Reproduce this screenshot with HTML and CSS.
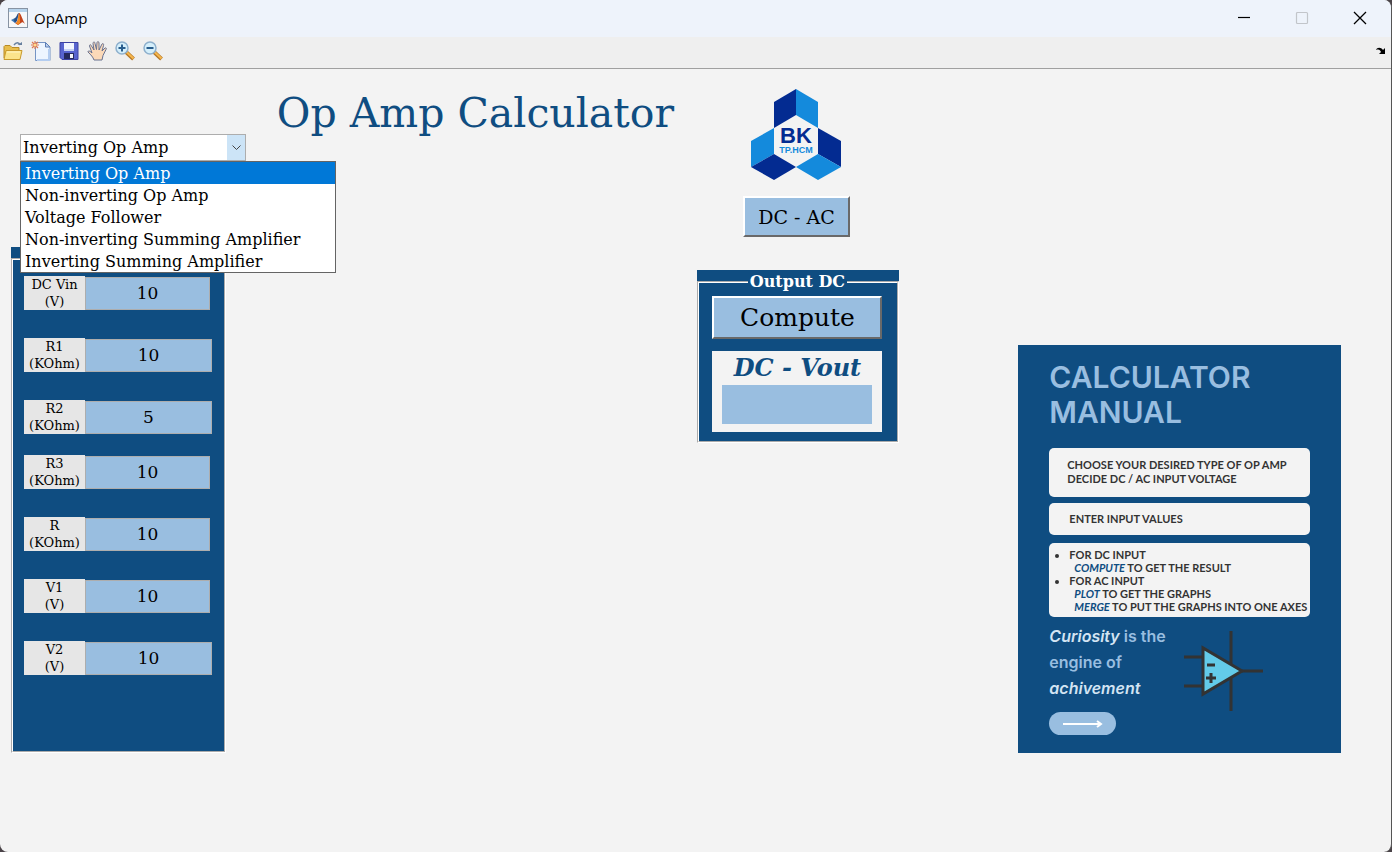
FILE: index.html
```html
<!DOCTYPE html>
<html lang="en">
<head>
<meta charset="utf-8">
<title>OpAmp</title>
<link rel="stylesheet" href="styles.css">
</head>
<body>
<div class="window">
  <header class="titlebar">
    <svg class="app-icon" viewBox="0 0 20 20" aria-hidden="true">
      <rect x=".5" y=".5" width="19" height="19" fill="#f7f8fa" stroke="#8793a3"/>
      <path d="M1 1h18v3H1z" fill="#b6d3ec"/>
      <path d="M3 12l4-2 2 2-2 3z" fill="#3c78b4"/>
      <path d="M7 10c2-1 2-5 4-5l-2 8-2 2-1-3z" fill="#264f88"/>
      <path d="M11 5c2 0 3 6 6 11-2-2-3-2-4-1l-3 2-3-2c3 0 3-5 4-10z" fill="#c4451c"/>
      <path d="M11 5c-1 5-1 9-3 10l2 2 2-2c0-4 0-7-1-10z" fill="#f08a24"/>
    </svg>
    <h1 class="app-name">OpAmp</h1>
    <div class="window-controls">
      <button class="win-btn" aria-label="Minimize"><svg viewBox="0 0 14 14"><path d="M1 6.5h12" stroke="#000" stroke-width="1.2"/></svg></button>
      <button class="win-btn" aria-label="Maximize" disabled><svg viewBox="0 0 14 14"><rect x="1.5" y="1.5" width="11" height="11" rx="1" fill="none" stroke="#c2c5ca" stroke-width="1.2"/></svg></button>
      <button class="win-btn" aria-label="Close"><svg viewBox="0 0 14 14"><path d="M1 1l12 12M13 1L1 13" stroke="#000" stroke-width="1.3"/></svg></button>
    </div>
  </header>

  <div class="toolbar" role="toolbar" aria-label="Figure tools">
    <button class="tool" aria-label="Open"><svg viewBox="0 0 20 20">
      <path d="M1 17V5.500l1-1h5l2 2h7v3" fill="#e8bd4b" stroke="#b98b24"/>
      <path d="M1 18.500l2-9h16l-2 9z" fill="#fbe48b" stroke="#c99a2c"/>
      <path d="M4 11h13" stroke="#fff6c8"/>
      <path d="M11 4c2-3 5-3 6 0" fill="none" stroke="#667f9e" stroke-width="1.400"/><path d="M14.500 4h4.500V1z" fill="#667f9e"/></svg></button>
    <button class="tool" aria-label="New"><svg viewBox="0 0 20 20">
      <path d="M4.500 1.500h10l4.500 4.500v13.500H4.500z" fill="#edf5ff" stroke="#7594c4"/>
      <path d="M18 8v11H6" fill="none" stroke="#b4cdf0" stroke-width="2"/>
      <path d="M14.500 1.500V6H19z" fill="#bed2ef" stroke="#5d7eb5"/>
      <path d="M4 0v8M0 4h8M1 1l6 6M7 1L1 7" stroke="#dd7954" stroke-width="1.200"/><circle cx="4" cy="4" r="1.500" fill="#ffdc8d"/></svg></button>
    <button class="tool" aria-label="Save"><svg viewBox="0 0 20 20">
      <path d="M1 1.500h18v17H3l-2-2z" fill="#5864cf" stroke="#3d43a2"/>
      <path d="M5 2h10v8H5z" fill="#f2f6ff"/><path d="M5 8h10v2H5z" fill="#c6d2f4"/>
      <path d="M5 12h10v6H5z" fill="#25295d"/><path d="M11 13h3v4h-3z" fill="#f5f6fb"/></svg></button>
    <button class="tool" aria-label="Pan"><svg viewBox="0 0 20 20">
      <path d="M7 19c-1-3-3-5-6-8 0-2 2-1 4 1L2.500 5c0-2 1.500-1.500 2 0L7 9 6 2.500c0-2 2-2 2 0l1.500 6 .5-7c.5-1.500 2-1 2 .5L12 9l3-6c1-1 2 0 1.500 1.500L15 10l3-3c1-.5 2 .5 1 1.500l-3 6-1 4.500z" fill="#fbd9b8" stroke="#69728f"/></svg></button>
    <button class="tool" aria-label="Zoom in"><svg viewBox="0 0 20 20">
      <path d="M11 11l7.500 7" stroke="#b57724" stroke-width="4"/><path d="M11.500 11l7 6.500" stroke="#f5b64e" stroke-width="2.200"/>
      <circle cx="7" cy="7" r="6" fill="#d5effb" stroke="#8eb0cd" stroke-width="1.500"/><path d="M3.500 7h7M7 3.500v7" stroke="#285d8d" stroke-width="2"/></svg></button>
    <button class="tool" aria-label="Zoom out"><svg viewBox="0 0 20 20">
      <path d="M11 11l7.500 7" stroke="#b57724" stroke-width="4"/><path d="M11.500 11l7 6.500" stroke="#f5b64e" stroke-width="2.200"/>
      <circle cx="7" cy="7" r="6" fill="#d5effb" stroke="#8eb0cd" stroke-width="1.500"/><path d="M3.500 7h7" stroke="#285d8d" stroke-width="2"/></svg></button>
    <button class="dock" aria-label="Dock figure"><svg viewBox="0 0 10 8"><path d="M0 3C1 0 5 0 7 3l2-2v6H3l2-2C4 3 3 2 0 3z" fill="#000"/></svg></button>
  </div>

  <main class="workspace">
    <section class="inputs">
      <div class="combo">
        <select class="combo-select" aria-label="Circuit type">
          <option>Inverting Op Amp</option>
          <option>Non-inverting Op Amp</option>
          <option>Voltage Follower</option>
          <option>Non-inverting Summing Amplifier</option>
          <option>Inverting Summing Amplifier</option>
        </select>
        <span class="combo-arrow"><svg viewBox="0 0 9 5"><path d="M.5.5l4 4 4-4" fill="none" stroke="#444"/></svg></span>
        <ul class="combo-list" role="listbox" aria-label="Circuit types">
          <li class="combo-item selected" role="option" aria-selected="true">Inverting Op Amp</li>
          <li class="combo-item" role="option">Non-inverting Op Amp</li>
          <li class="combo-item" role="option">Voltage Follower</li>
          <li class="combo-item" role="option">Non-inverting Summing Amplifier</li>
          <li class="combo-item" role="option">Inverting Summing Amplifier</li>
        </ul>
      </div>
      <div class="panel input-panel">
        <fieldset class="frame input-frame" aria-label="Input">
          <div class="field"><label class="field-label" for="vin">DC Vin<br>(V)</label><input class="field-input" id="vin" value="10"></div>
          <div class="field wide"><label class="field-label" for="r1">R1<br>(KOhm)</label><input class="field-input" id="r1" value="10"></div>
          <div class="field wide tight"><label class="field-label" for="r2">R2<br>(KOhm)</label><input class="field-input" id="r2" value="5"></div>
          <div class="field"><label class="field-label" for="r3">R3<br>(KOhm)</label><input class="field-input" id="r3" value="10"></div>
          <div class="field"><label class="field-label" for="r">R<br>(KOhm)</label><input class="field-input" id="r" value="10"></div>
          <div class="field"><label class="field-label" for="v1">V1<br>(V)</label><input class="field-input" id="v1" value="10"></div>
          <div class="field wide"><label class="field-label" for="v2">V2<br>(V)</label><input class="field-input" id="v2" value="10"></div>
        </fieldset>
      </div>
    </section>

    <h2 class="page-title">Op Amp Calculator</h2>

    <section class="outputs">
      <div class="brand">
        <svg class="logo" viewBox="0 0 90 91" role="img" aria-label="BK TP.HCM">
          <path d="M45 0v26L23 39V13z" fill="#032b91"/>
          <path d="M45 0l22 13v26L45 26z" fill="#148adc"/>
          <path d="M23 39v26L0 78V52z" fill="#148adc"/>
          <path d="M0 78l23-13 22 13-22 13z" fill="#032b91"/>
          <path d="M67 39l23 13v26L67 65z" fill="#032b91"/>
          <path d="M45 78l22-13 23 13-23 13z" fill="#148adc"/>
          <text class="logo-name" x="45" y="54">BK</text>
          <text class="logo-place" x="45" y="64">TP.HCM</text>
        </svg>
        <button class="push mode">DC - AC</button>
      </div>
      <div class="panel output-panel">
        <fieldset class="frame output-frame">
          <legend class="frame-title">Output DC</legend>
          <button class="push compute">Compute</button>
          <div class="result">
            <label class="result-label" for="vout">DC - Vout</label>
            <input class="result-value" id="vout" readonly>
          </div>
        </fieldset>
      </div>
    </section>

    <aside class="manual">
      <h2 class="manual-title">CALCULATOR MANUAL</h2>
      <p class="note note-choose">CHOOSE YOUR DESIRED TYPE OF OP AMP<br>DECIDE DC / AC INPUT VOLTAGE</p>
      <p class="note note-enter">ENTER INPUT VALUES</p>
      <ul class="note note-steps">
        <li>FOR DC INPUT<div class="step"><em>COMPUTE</em> TO GET THE RESULT</div></li>
        <li>FOR AC INPUT<div class="step"><em>PLOT</em> TO GET THE GRAPHS</div><div class="step"><em>MERGE</em> TO PUT THE GRAPHS INTO ONE AXES</div></li>
      </ul>
      <div class="quote-row">
        <p class="quote"><em>Curiosity</em> is the<br>engine of<br><em>achivement</em></p>
        <svg class="opamp" viewBox="0 0 80 82" aria-hidden="true">
          <path d="M47 1v80M0 27h20M0 56h20M58 41h21" stroke="#333" stroke-width="3" fill="none"/>
          <path d="M19 18v46l39-23z" fill="#63cbe9" stroke="#333" stroke-width="3"/>
          <path d="M23 35h8M22 48h10M27 43v10" stroke="#333" stroke-width="3"/>
        </svg>
      </div>
      <button class="next" aria-label="Next"><svg viewBox="0 0 40 8"><path d="M0 4h38M34 1l4 3-4 3" fill="none" stroke="#fff" stroke-width="2"/></svg></button>
    </aside>
  </main>
</div>
</body>
</html>
```
FILE: styles.css
```css
* { box-sizing: border-box; }
body { margin: 0; background: #4a4348; font-family: "DejaVu Serif", serif; color: #000; }
h1, h2, p, ul, fieldset { margin: 0; padding: 0; }
button, input, select { font-family: inherit; color: inherit; margin: 0; border-radius: 0; }
svg { display: block; }

.window { min-height: 100vh; display: flex; flex-direction: column; background: #f3f3f3; border-right: 1px solid #555; border-radius: 8px; overflow: hidden; }

.titlebar { display: flex; align-items: center; height: 37px; padding: 0 2px 1px 8px; background: #eef3fb; }
.app-icon { width: 20px; height: 20px; }
.app-name { margin-left: 6px; font: 400 15px "Open Sans", sans-serif; }
.window-controls { display: flex; margin-left: auto; }
.win-btn { width: 58px; height: 36px; border: 0; padding: 0; background: none; display: grid; place-items: center; }
.win-btn svg { width: 14px; height: 14px; }

.toolbar { display: flex; align-items: center; gap: 8px; height: 32px; padding: 0 5px 3px 3px; background: #efefef; border-bottom: 1px solid #a0a0a0; }
.tool { width: 20px; height: 20px; border: 0; padding: 0; background: none; }
.tool svg { width: 20px; height: 20px; }
.dock { margin-left: auto; border: 0; padding: 0; background: none; }
.dock svg { width: 10px; height: 8px; }

.workspace { flex: 1; display: grid; grid-template-columns: 266fr 422fr 218fr 486fr; align-items: start; }

.inputs { padding: 65px 0 0 11px; }
.combo { position: relative; display: flex; width: 226px; height: 27px; margin: 0 0 86px 9px; border: 1px solid #adadad; background: #fff; font-size: 16px; }
.combo-select { flex: 1; min-width: 0; border: 0; padding: 0 2px; background: #fff; appearance: none; font-size: 16px; }
.combo-arrow { display: grid; place-items: center; width: 18px; background: #cce4f7; }
.combo-arrow svg { width: 9px; height: 5px; }
.combo-list { position: absolute; z-index: 1; top: 26px; left: -1px; width: 316px; list-style: none; background: #fff; border: 1px solid #646464; }
.combo-item { padding: 2px 0 0 4px; line-height: 20px; white-space: nowrap; }
.combo-item.selected { background: #0078d7; color: #fff; }

.panel { background: #0f4d81; }
.frame { min-width: 0; border: 2px groove #fff; }
.input-panel { width: 215px; padding-top: 11px; }
.input-frame { display: flex; flex-direction: column; gap: 28px; padding: 16px 0 76px 11px; }
.field { display: flex; align-items: flex-end; width: 186px; height: 34px; }
.field.wide { width: 188px; }
.field.tight { margin-bottom: -7px; }
.field-label { width: 61px; height: 34px; background: #e6e6e6; font-size: 13px; line-height: 17px; text-align: center; overflow: hidden; }
.field-input { flex: 1; min-width: 0; height: 33px; padding: 0 0 2px; border: 1px solid #adadad; background: #99bee0; font-size: 17px; text-align: center; }

.page-title { padding: 20px 0 0 11px; color: #0f4d81; font-size: 41px; line-height: 48px; font-weight: 400; white-space: nowrap; }

.outputs { display: flex; flex-direction: column; align-items: center; padding: 20px 0 0 4px; }
.brand { display: flex; flex-direction: column; align-items: center; gap: 16px; margin: 0 4px 33px 0; }
.logo { width: 90px; height: 91px; }
.logo-name { font: 700 22px "Liberation Sans", sans-serif; text-anchor: middle; fill: #032b91; }
.logo-place { font: 700 9px "Liberation Sans", sans-serif; text-anchor: middle; fill: #148adc; }
.push { padding: 0; border: 2px solid; border-color: #fff #696969 #696969 #fff; background: #99bee0; }
.mode { width: 107px; height: 41px; font-size: 19px; }
.output-panel { width: 202px; }
.output-frame { padding: 2px 15px 9px 13px; }
.frame-title { margin: 0 auto; padding: 0 2px; color: #fff; font-size: 16px; line-height: 24px; font-weight: 700; }
.compute { display: block; width: 100%; height: 43px; font-size: 25px; }
.result { display: flex; flex-direction: column; align-items: center; margin-top: 12px; padding-bottom: 8px; background: #f3f3f3; }
.result-label { color: #0f4d81; font-size: 24px; line-height: 34px; font-weight: 700; font-style: italic; white-space: nowrap; }
.result-value { width: 150px; height: 39px; border: 0; background: #99bee0; }

.manual { display: flex; flex-direction: column; width: 323px; margin: 276px 0 0 113px; padding: 15px 31px 18px; background: #0f4d81; font-family: Inter, sans-serif; }
.manual-title { margin-bottom: 18px; color: #99bee0; font-size: 30px; line-height: 35px; font-weight: 600; }
.note { border-radius: 5px; background: #f3f3f3; color: #333; font-family: Lato, sans-serif; font-size: 11px; font-weight: 700; white-space: nowrap; }
.note em { color: #0f4d81; }
.note-choose { padding: 10px 18px 11px; line-height: 14px; }
.note-enter { margin: 6px 0 8px; padding: 9px 20px; line-height: 14px; }
.note-steps { padding: 5px 0 4px 20px; line-height: 13px; }
.step { padding-left: 5px; }
.quote-row { display: flex; justify-content: space-between; padding: 6px 46px 0 0; }
.quote { color: #99bee0; font-size: 16px; line-height: 26px; font-weight: 600; white-space: nowrap; }
.quote em { color: #d3e4f3; }
.opamp { width: 80px; height: 82px; margin-top: 7px; }
.next { display: grid; place-items: center; width: 67px; height: 23px; border: 0; border-radius: 12px; background: #99bee0; }
.next svg { width: 40px; height: 8px; }
```
